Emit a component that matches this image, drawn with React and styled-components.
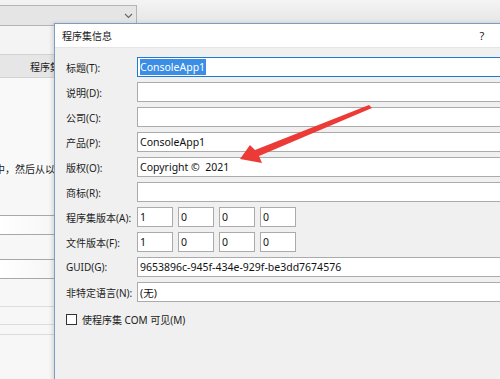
import React from "react";
import styled, { createGlobalStyle } from "styled-components";

const Global = createGlobalStyle`
  html, body { margin: 0; padding: 0; background: #f0f0f0; overflow: hidden; }
  * { box-sizing: border-box; }
`;

const FONT = `"Noto Sans", "Noto Sans CJK SC", sans-serif`;

const Stage = styled.div`
  position: relative;
  width: 500px;
  height: 379px;
  overflow: hidden;
  background: #f7f7f7;
  font-family: ${FONT};
  color: #1a1a1a;
`;

/* ---------- background application ---------- */
const BackApp = styled.div`
  display: flex;
  flex-direction: column;
  width: 500px;
  height: 379px;
`;

const TopBar = styled.div`
  display: flex;
  align-items: flex-end;
  height: 26px;
  background: linear-gradient(#f4f4f4, #e4e4e4);
`;

const Combo = styled.div`
  width: 137px;
  height: 21px;
  background: #e5e5e5;
  border: 1px solid #b4b4b4;
  border-left: none;
  display: flex;
  align-items: center;
  justify-content: flex-end;
  padding-right: 3px;
`;

const Band = styled.div`
  width: 54px;
  height: ${(p) => p.$h}px;
  background: ${(p) => p.$bg};
  border-top: ${(p) => (p.$line ? "1px solid #d2d2d2" : "none")};
  border-bottom: ${(p) => (p.$line ? "1px solid #d2d2d2" : "none")};
  display: flex;
  align-items: center;
  padding-left: ${(p) => p.$pl || 0}px;
  font-size: 10px;
  white-space: nowrap;
  overflow: hidden;
`;

const BackText = styled.span`
  margin-left: -5px;
  font-size: 10px;
`;

const BackField = styled.div`
  height: 20px;
  width: 54px;
  background: linear-gradient(90deg, #ffffff, #f6f6f6);
  border-top: 1px solid #a8a8a8;
  border-bottom: 1px solid #a8a8a8;
`;

const Gap = styled.div`
  height: ${(p) => p.$h}px;
`;

const FaintLine = styled.div`
  height: 1px;
  width: 54px;
  background: #dcdcdc;
`;

/* ---------- dialog ---------- */
const Dialog = styled.div`
  position: absolute;
  left: 54px;
  top: 23px;
  width: 460px;
  height: 380px;
  border: 1px solid #7c9dc2;
  background: #f0f0f0;
  box-shadow: -2px 0 4px rgba(0, 0, 0, 0.12);
  display: flex;
  flex-direction: column;
`;

const TitleBar = styled.div`
  height: 24px;
  background: #ffffff;
  border-bottom: 1px solid #e6e6e6;
  display: flex;
  align-items: center;
  padding-left: 7px;
  font-size: 10px;
`;

const TitleText = styled.span`
  flex: 1;
`;

const Help = styled.span`
  width: 30px;
  margin-right: 16px;
  text-align: center;
  font-size: 11px;
`;

const Body = styled.div`
  padding: 9px 10px 0 11px;
  display: flex;
  flex-direction: column;
`;

const Form = styled.div`
  display: grid;
  grid-template-columns: 71px 1fr;
  grid-auto-rows: 20px;
  row-gap: 5px;
  align-items: center;
`;

const Label = styled.label`
  font-size: 10px;
  white-space: nowrap;
  color: #1e1e1e;
`;

const Field = styled.div`
  height: 20px;
  background: #ffffff;
  border: 1px solid ${(p) => (p.$focus ? "#1c7bd6" : "#ababab")};
  display: flex;
  align-items: center;
  padding-left: 2px;
  font-size: 10.5px;
  white-space: pre;
  overflow: hidden;
  color: #111;
`;

const Selected = styled.span`
  background: #3a8ee6;
  color: #ffffff;
  line-height: 16px;
  padding: 0 1px 0 0;
`;

const VersionRow = styled.div`
  display: flex;
  gap: 5px;
`;

const VersionBox = styled(Field)`
  width: 36px;
`;

const CheckRow = styled.div`
  display: flex;
  align-items: center;
  gap: 5px;
  margin-top: 10px;
  font-size: 10px;
`;

const CheckBox = styled.span`
  width: 11px;
  height: 11px;
  border: 1px solid #333;
  background: #fff;
`;

const Arrow = styled.svg`
  position: absolute;
  left: 0;
  top: 0;
  pointer-events: none;
`;

const textRows = [
  ["标题(T):", "ConsoleApp1", true],
  ["说明(D):", ""],
  ["公司(C):", ""],
  ["产品(P):", "ConsoleApp1"],
  ["版权(O):", "Copyright ©  2021"],
  ["商标(R):", ""],
];

export default function App() {
  return (
    <Stage>
      <Global />
      <BackApp>
        <TopBar>
          <Combo>
            <svg width="9" height="6" viewBox="0 0 9 6">
              <path d="M1 1 L4.5 4.5 L8 1" fill="none" stroke="#666" strokeWidth="1.1" />
            </svg>
          </Combo>
        </TopBar>
        <Band $h={28} $bg="#f4f4f4" />
        <Band $h={24} $bg="#e6e6e6" $line $pl={30}>
          程序集
        </Band>
        <Band $h={83} $bg="#f9f9f9" />
        <Band $h={14} $bg="#f9f9f9">
          <BackText>中，然后从以</BackText>
        </Band>
        <Gap $h={40} />
        <BackField />
        <Gap $h={24} />
        <BackField />
        <Gap $h={27} />
        <FaintLine />
        <Gap $h={17} />
        <FaintLine />
        <Gap $h={9} />
        <FaintLine />
      </BackApp>

      <Dialog>
        <TitleBar>
          <TitleText>程序集信息</TitleText>
          <Help>?</Help>
        </TitleBar>
        <Body>
          <Form>
            {textRows.map(([label, value, focus]) => (
              <React.Fragment key={label}>
                <Label>{label}</Label>
                <Field $focus={focus}>
                  {focus ? <Selected>{value}</Selected> : value}
                </Field>
              </React.Fragment>
            ))}
            <Label>程序集版本(A):</Label>
            <VersionRow>
              {["1", "0", "0", "0"].map((v, i) => (
                <VersionBox key={i}>{v}</VersionBox>
              ))}
            </VersionRow>
            <Label>文件版本(F):</Label>
            <VersionRow>
              {["1", "0", "0", "0"].map((v, i) => (
                <VersionBox key={i}>{v}</VersionBox>
              ))}
            </VersionRow>
            <Label>GUID(G):</Label>
            <Field>9653896c-945f-434e-929f-be3dd7674576</Field>
            <Label>非特定语言(N):</Label>
            <Field>(无)</Field>
          </Form>
          <CheckRow>
            <CheckBox />
            <span>使程序集 COM 可见(M)</span>
          </CheckRow>
        </Body>
      </Dialog>

      <Arrow width="500" height="379" viewBox="0 0 500 379">
        <polygon
          points="240,159 250,145 255,150 369,105 372,108 259,156 262,163"
          fill="#ec3a36"
        />
      </Arrow>
    </Stage>
  );
}
